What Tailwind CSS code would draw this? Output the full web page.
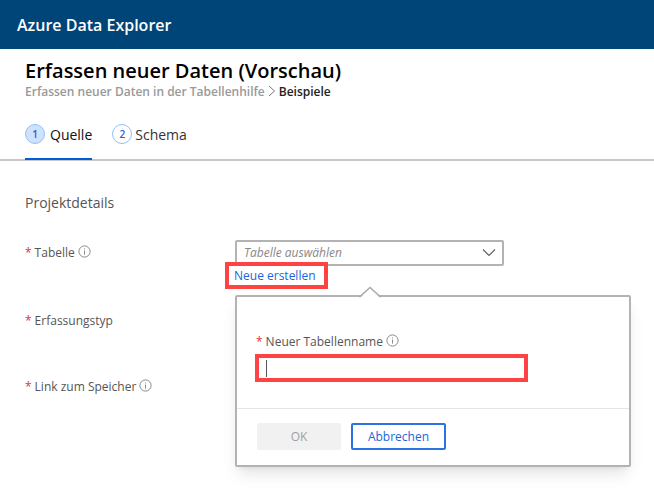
<!DOCTYPE html>
<html lang="de">
<head>
<meta charset="utf-8">
<meta name="viewport" content="width=device-width, initial-scale=1">
<title>Azure Data Explorer</title>
<script src="https://cdn.jsdelivr.net/npm/@tailwindcss/browser@4"></script>
</head>
<body class="min-h-screen bg-white font-['Open_Sans','Noto_Sans',sans-serif] text-[12px] text-[#555555]">
<svg class="hidden" aria-hidden="true">
  <symbol id="info" viewBox="0 0 13 13">
    <circle cx="6.5" cy="6.5" r="5.6" fill="none" stroke="#888" stroke-width="1"/>
    <path d="M6.5 5.6v4M6.5 3.4v1" stroke="#888" stroke-width="1" fill="none"/>
  </symbol>
</svg>

<header class="flex h-[49px] items-center bg-[#004578] px-[17px] text-[16px] font-semibold text-white">Azure Data Explorer</header>

<div class="px-[25px] pt-[9px]">
  <h1 class="text-[20px] leading-[26px] font-semibold whitespace-nowrap text-black">Erfassen neuer Daten (Vorschau)</h1>
  <nav aria-label="Brotkrumen" class="flex items-center gap-[3px] leading-4 font-semibold whitespace-nowrap">
    <a href="#" class="text-[#999999]">Erfassen neuer Daten in der Tabellenhilfe</a>
    <svg class="mb-[2px] h-3 w-2" viewBox="0 0 8 12" fill="none" stroke="#777" aria-hidden="true"><path d="M1 1 6.500 6 1 11"/></svg>
    <span class="text-[#222222]">Beispiele</span>
  </nav>
</div>

<nav aria-label="Schritte" class="mt-5 flex gap-5 border-b-2 border-[#c8c8c8] px-[25px] text-[14px]">
  <a href="#" aria-current="step" class="-mb-px flex h-10 items-start gap-[5px] border-b-2 border-[#015cda] pt-1 text-[#111111]">
    <span class="flex size-5 items-center justify-center rounded-full border border-[#8fc1fa] bg-[#cfe1fc] text-[10px] font-semibold text-[#1a62d6]">1</span>
    <span class="leading-[22px]">Quelle</span>
  </a>
  <a href="#" class="flex items-start gap-[3px] pt-1 text-[#333333]">
    <span class="flex size-5 items-center justify-center rounded-full border border-[#8fc1fa] text-[10px] font-semibold text-[#1a62d6]">2</span>
    <span class="leading-[22px]">Schema</span>
  </a>
</nav>

<main class="px-[25px] pt-[30px]">
  <h2 class="text-[14px] leading-6">Projektdetails</h2>

  <form class="mt-[25px] flex flex-col gap-[19px]">
    <div class="grid grid-cols-[210px_1fr]">
      <label for="table" class="flex h-[26px] items-center gap-[3px]"><span class="text-[#e0303c]">*</span>Tabelle<svg class="mb-1 size-[13px]"><use href="#info"/></svg></label>
      <div class="relative">
        <div class="relative w-[269px]">
          <select id="table" class="h-[26px] w-full appearance-none rounded-xs border-2 border-[#b3b3b3] bg-white px-[7px] text-[12px] text-[#888888] italic"><option>Tabelle auswählen</option></select>
          <svg class="pointer-events-none absolute top-2 right-2 h-[10px] w-[14px]" viewBox="0 0 14 10" fill="none" stroke="#666" stroke-width="1.2" aria-hidden="true"><path d="m1 1.500 6 6 6-6"/></svg>
        </div>
        <button type="button" class="relative -mt-1 -ml-[10px] block h-[27px] w-[103px] border-4 border-[#ff4343] pl-[5px] text-left whitespace-nowrap text-[#1a66dc]">Neue erstellen</button>

        <section role="dialog" aria-label="Neue Tabelle erstellen" class="absolute top-[55px] -right-0.5 left-0 z-10 rounded-xs border-2 border-[#b3b3b3] bg-white shadow-lg">
          <svg class="absolute -top-[11px] left-[121px] h-[12px] w-6" viewBox="0 0 24 12" aria-hidden="true"><path d="M2 12 12 1.500 22 12Z" fill="#fff"/><path d="M1 10.500h1L12 1.500l10 9h1" fill="none" stroke="#aaa" stroke-width="1.500"/></svg>
          <div class="px-[18px] pt-[33px] pb-[26px]">
            <label for="name" class="flex h-6 items-center gap-[3px] pl-px"><span class="text-[#e0303c]">*</span>Neuer Tabellenname<svg class="mb-1 size-[13px]"><use href="#info"/></svg></label>
            <div class="relative w-[273px]">
              <input id="name" type="text" class="block h-7 w-full border-4 border-[#ff4343] bg-white px-2 outline-none">
              <span class="absolute top-[6px] left-[11px] h-[17px] w-px bg-[#555555]"></span>
            </div>
          </div>
          <div class="flex gap-[10px] border-t border-[#e5e5e5] px-5 pt-[14px] pb-[15px]">
            <button type="button" disabled class="h-[27px] w-[84px] rounded-xs bg-[#f1f1f1] text-[#a0a0a0]">OK</button>
            <button type="button" class="h-[27px] w-[95px] rounded-xs border-2 border-[#2a73e0] text-[#1a66dc]">Abbrechen</button>
          </div>
        </section>
      </div>
    </div>

    <div class="grid grid-cols-[210px_1fr] pb-[21px]">
      <label for="type" class="flex h-[26px] items-center gap-[3px]"><span class="text-[#e0303c]">*</span>Erfassungstyp</label>
      <input id="type" type="text" class="h-[26px] w-[269px] rounded-xs border border-[#b3b3b3]">
    </div>
    <div class="grid grid-cols-[210px_1fr]">
      <label for="link" class="flex h-[26px] items-center gap-[3px]"><span class="text-[#e0303c]">*</span>Link zum Speicher<svg class="mb-1 size-[13px]"><use href="#info"/></svg></label>
      <input id="link" type="text" class="h-[26px] w-[269px] rounded-xs border border-[#b3b3b3]">
    </div>
  </form>
</main>
</body>
</html>
